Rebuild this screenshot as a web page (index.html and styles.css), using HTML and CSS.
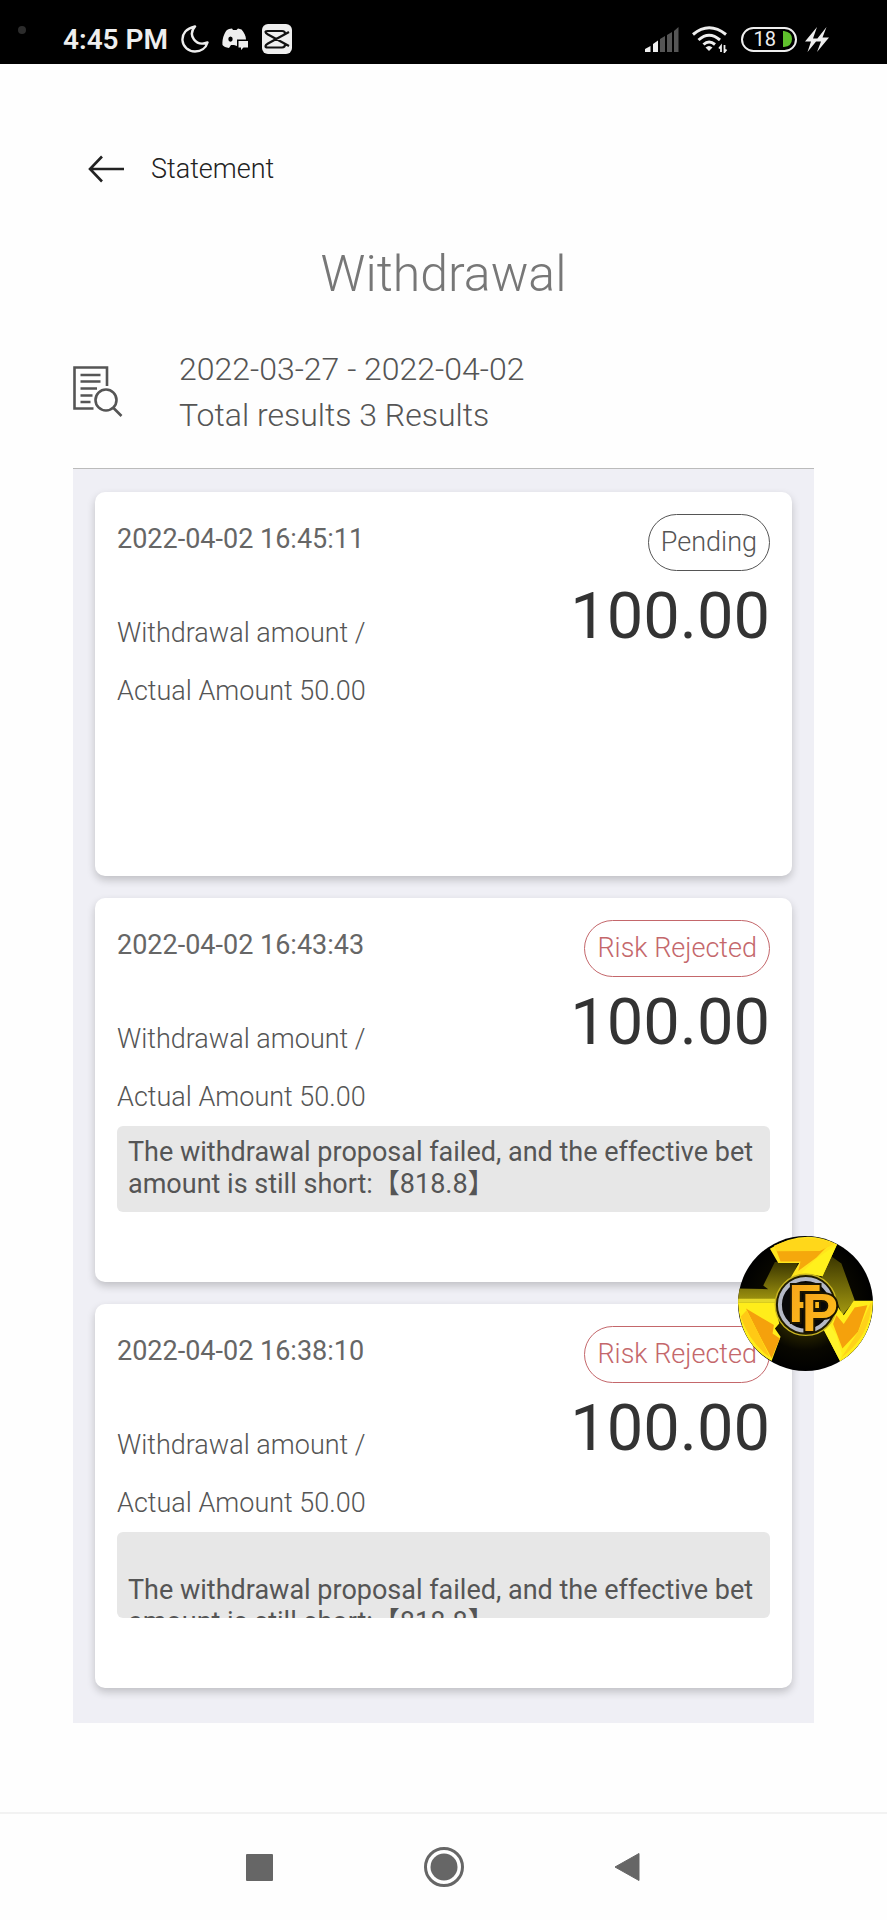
FILE: index.html
```
<!DOCTYPE html>
<html lang="en">
<head>
  <meta charset="UTF-8">
  <meta name="viewport" content="width=device-width, initial-scale=1.0">
  <title>Withdrawal</title>
  <link rel="stylesheet" href="styles.css">
</head>
<body>
  <div class="status-bar">
    <span class="camera"></span>
    <div class="status-left">
      <span class="clock">4:45 PM</span>
      <svg width="28" height="28" viewBox="0 0 28 28" fill="none" stroke="#eee" stroke-width="2.400" stroke-linejoin="round">
        <path d="M14 1.500C5 3.500 1 9 1.500 15.500C2 22 7.500 26.500 14 26.500C20 26.500 25 23 26.500 17.500C21 19.500 16 18.500 13 14.500C10 10.500 10.500 5.500 14 1.500Z"/>
      </svg>
      <svg width="27" height="22" viewBox="0 0 27 22">
        <path fill="#eee" fill-rule="evenodd" d="M7 1L10 0.500L11 2H14.500L16 0.500L19.500 1.500C22 4 24 8 24 11.500H15V18L12 17H9L7 20C4 19.500 1.500 18.500 0.500 17C0 10.500 2.500 4.500 5 2ZM8.500 8.500A2.200 2.600 0 1 0 8.500 13.700A2.200 2.600 0 1 0 8.500 8.500Z"/>
        <path fill="#eee" d="M17 13H26V19.500H21.500L19 22V19.500H16.500V13Z"/>
      </svg>
      <svg width="30" height="30" viewBox="0 0 30 30">
        <rect width="30" height="30" rx="6" fill="#eee"/>
        <path d="M27 8L6 19.500Q3.500 21 3.500 22Q3.500 23.500 5.500 23.500H20Q23 23.500 23 20.500M27 22L6 10.500Q3.500 9 3.500 8Q3.500 7 5.500 7H20Q23 7 23 9.500" fill="none" stroke="#111" stroke-width="2.200"/>
      </svg>
    </div>
    <div class="status-right">
      <svg width="34" height="25" viewBox="0 0 34 25">
        <path fill="#eee" d="M0 25V22L5.500 19V25ZM8 25V17L13 13.500V25Z"/>
        <path fill="#555" d="M15 25V12L20 9V25ZM22 25V8L27 5V25ZM29 25V4L33.500 0V25Z"/>
      </svg>
      <svg width="36" height="27" viewBox="0 0 36 27" fill="none" stroke="#eee" stroke-width="3">
        <path d="M1 8.500Q17 -5 34 8.500M6.500 14Q17 4.500 28 14M11.500 18.500Q17 13.500 23 18.500"/>
        <path d="M17 25L13.500 21.500Q17 18.500 20.500 21.500Z" fill="#eee" stroke="none"/>
        <path d="M29 26V20L27 22.500M32.500 19V26L34.500 23.500" stroke-width="1.800"/>
      </svg>
      <span class="battery">
        <span>18</span>
        <svg width="9" height="16" viewBox="0 0 9 16"><path fill="#5fc02c" d="M0 0H1Q9 1 9 8T1 16H0Z"/></svg>
      </span>
      <svg class="bolt" width="24" height="25" viewBox="0 0 24 25" fill="#eee">
        <path d="M12 0L0 14.500H6L2.500 25L13.500 11.500H8ZM21.500 0L10 14.500H16L12 25L24 10.500H17.500Z"/>
      </svg>
    </div>
  </div>

  <main class="page">
    <a href="#" class="back">
      <svg width="36" height="28" viewBox="0 0 36 28" fill="none" stroke="#222" stroke-width="2.600">
        <path d="M14 1.500L2 14L14 26.500M2 14H36"/>
      </svg>
      Statement
    </a>
    <h1 class="title">Withdrawal</h1>

    <div class="summary">
      <svg width="50" height="52" viewBox="0 0 50 52" fill="none" stroke="#555" stroke-width="2.600">
        <path d="M20.500 42.500H1.500V1.500H34V20M7.500 9H27.500M7.500 15.500H27.500M7.500 22.500H24M7.500 29.500H19.500M7.500 36H17.500M40 41.500L48.500 50"/>
        <circle cx="33" cy="34" r="10.500"/>
      </svg>
      <div class="summary-text">
        2022-03-27 - 2022-04-02<br>
        Total results 3 Results
      </div>
    </div>

    <div class="list">
      <div class="card">
        <div class="card-top">
          <div class="info">
            <div class="date">2022-04-02 16:45:11</div>
            <div class="label">Withdrawal amount /</div>
            <div class="label">Actual Amount 50.00</div>
          </div>
          <div class="result">
            <span class="status">Pending</span>
            <div class="amount">100.00</div>
          </div>
        </div>
      </div>

      <div class="card">
        <div class="card-top">
          <div class="info">
            <div class="date">2022-04-02 16:43:43</div>
            <div class="label">Withdrawal amount /</div>
            <div class="label">Actual Amount 50.00</div>
          </div>
          <div class="result">
            <span class="status rejected">Risk Rejected</span>
            <div class="amount">100.00</div>
          </div>
        </div>
        <div class="note">The withdrawal proposal failed, and the effective bet amount is still short:【818.8】</div>
      </div>

      <div class="card">
        <div class="card-top">
          <div class="info">
            <div class="date">2022-04-02 16:38:10</div>
            <div class="label">Withdrawal amount /</div>
            <div class="label">Actual Amount 50.00</div>
          </div>
          <div class="result">
            <span class="status rejected">Risk Rejected</span>
            <div class="amount">100.00</div>
          </div>
        </div>
        <div class="note"><br>The withdrawal proposal failed, and the effective bet amount is still short:【818.8】</div>
      </div>
    </div>
  </main>

  <button class="bubble" aria-label="FP">
    <svg viewBox="54 47 406 406">
      <defs>
        <clipPath id="round"><circle cx="257" cy="250" r="203"/></clipPath>
        <linearGradient id="olive" x1="0" y1="0" x2="0" y2="1">
          <stop offset="0" stop-color="#3a3500"/>
          <stop offset="1" stop-color="#a59a10"/>
        </linearGradient>
        <linearGradient id="gold" x1="0" y1="0" x2="1" y2="1">
          <stop offset="0" stop-color="#f5a01a"/>
          <stop offset="1" stop-color="#ffc41c"/>
        </linearGradient>
        <radialGradient id="dark" cx="0.5" cy="0.5" r="0.5">
          <stop offset="0.4" stop-color="#2c2800"/>
          <stop offset="0.7" stop-color="#080700"/>
          <stop offset="1" stop-color="#000"/>
        </radialGradient>
      </defs>
      <g clip-path="url(#round)">
        <rect x="54" y="47" width="406" height="406" fill="url(#dark)"/>
        <path fill="url(#olive)" d="M165 125H235L210 190L180 230L165 248H54V205L145 207L130 196Z"/>
        <path fill="#e6d92a" d="M54 236H170V248H54Z"/>
        <path fill="url(#olive)" d="M330 105L365 130L405 240L368 285L345 225L305 170Z"/>
        <path fill="#ffe51c" d="M150 85Q255 20 352 72L308 168Q250 150 205 185L238 128H175Z"/>
        <path fill="#f5a80c" d="M165 78L335 66L290 112L235 152L242 124H182Z"/>
        <path fill="#ffd71a" d="M162 76Q255 35 345 70L300 92L170 93Z"/>
        <path fill="#fff01c" d="M352 72L308 168L245 158L290 115Z"/>
        <path fill="#ffed1a" d="M54 248H166L178 310L165 325L182 350L155 423Q60 370 54 248Z"/>
        <path fill="#f5a10c" d="M78 265L162 315L158 340L180 355L155 415L118 345Z"/>
        <path fill="#ffc915" d="M80 270L118 345L150 412Q90 370 62 290Z"/>
        <path fill="#ffed1a" d="M460 242H402L372 285L350 255L342 290L310 325L362 425Q460 360 460 242Z"/>
        <path fill="#f5a10c" d="M443 255L405 262L372 312L350 285L340 312L368 385L415 335Z"/>
        <path fill="#ffd21a" d="M452 250L415 335L366 412Q450 350 456 248Z"/>
        <path fill="#fff42a" d="M328 312L350 345L366 400L362 425L310 325Z"/>
      </g>
      <circle cx="258" cy="254" r="92" fill="#211d00" stroke="#c9b520" stroke-width="4"/>
      <circle cx="258" cy="254" r="78" fill="#080808" stroke="#b5b9c6" stroke-width="12"/>
      <g class="monogram">
        <text x="205" y="306">F</text>
        <text x="246" y="334">P</text>
      </g>
    </svg>
  </button>

  <nav class="nav-bar">
    <button aria-label="Recent apps">
      <svg width="27" height="27" viewBox="0 0 27 27"><rect width="27" height="27" rx="1" fill="#666"/></svg>
    </button>
    <button aria-label="Home">
      <svg width="40" height="40" viewBox="0 0 40 40"><circle cx="20" cy="20" r="18.500" fill="none" stroke="#666" stroke-width="3"/><circle cx="20" cy="20" r="13.500" fill="#666"/></svg>
    </button>
    <button aria-label="Back">
      <svg width="28" height="30" viewBox="0 0 28 30"><path d="M1 15L25 1.500V28.500Z" fill="#666" stroke="#666" stroke-linejoin="round"/></svg>
    </button>
  </nav>
</body>
</html>
```
FILE: styles.css
```
* {
  box-sizing: border-box;
}
body {
  margin: 0;
  min-height: 100vh;
  display: flex;
  flex-direction: column;
  position: relative;
  background: #fefefe;
  color: #555;
  font-family: Roboto, 'Noto Sans CJK SC', sans-serif;
  font-size: 27px;
}
svg {
  display: block;
  flex-shrink: 0;
}
button {
  border: none;
  padding: 0;
  background: none;
  cursor: pointer;
}
.status-bar {
  display: flex;
  justify-content: space-between;
  height: 64px;
  padding: 14px 58px 0 63px;
  background: #000;
  color: #eee;
}
.status-left, .status-right {
  display: flex;
  align-items: center;
  gap: 13px;
}
.camera {
  position: absolute;
  top: 26px;
  left: 18px;
  width: 8px;
  height: 8px;
  border-radius: 50%;
  background: #2c2c2c;
}
.clock {
  font-size: 28px;
  font-weight: 600;
}
.battery {
  display: flex;
  align-items: center;
  justify-content: flex-end;
  gap: 7px;
  width: 56px;
  height: 25px;
  padding-right: 3px;
  border: 2px solid #eee;
  border-radius: 13px;
  font-size: 20px;
}
.bolt {
  margin-left: -5px;
}
.page {
  padding: 85px 73px 0;
}
.back {
  display: inline-flex;
  align-items: center;
  gap: 27px;
  padding-left: 15px;
  line-height: 40px;
  font-weight: 300;
  color: #222;
  text-decoration: none;
}
.title {
  margin: 54px 0 42px;
  text-align: center;
  font-size: 50px;
  font-weight: 300;
  line-height: 60px;
  color: #777;
}
.summary {
  display: flex;
  align-items: center;
  gap: 56px;
  padding-bottom: 30px;
  border-bottom: 1px solid #bbb;
}
.summary-text {
  font-size: 32px;
  font-weight: 300;
  line-height: 46px;
}
.list {
  display: flex;
  flex-direction: column;
  gap: 22px;
  padding: 23px 22px 35px;
  background: #efeff5;
}
.card {
  min-height: 384px;
  padding: 22px;
  border-radius: 10px;
  background: #fff;
  box-shadow: 0 4px 8px rgba(0, 0, 0, 0.2);
}
.card-top {
  display: flex;
  justify-content: space-between;
}
.date {
  margin-bottom: 40px;
  line-height: 50px;
  color: #666;
}
.label {
  line-height: 58px;
  font-weight: 300;
}
.result {
  display: flex;
  flex-direction: column;
  align-items: flex-end;
}
.status {
  padding: 0 12px;
  border: 1px solid #555;
  border-radius: 29px;
  line-height: 55px;
  font-weight: 300;
}
.status.rejected {
  border-color: #c4676b;
  color: #c4676b;
}
.amount {
  font-size: 65px;
  line-height: 90px;
  color: #333;
}
.note {
  height: 86px;
  padding: 10px 11px;
  overflow: hidden;
  border-radius: 6px;
  background: #e7e7e7;
  line-height: 32px;
}
.bubble {
  position: absolute;
  top: 1236px;
  right: 14px;
  width: 135px;
  height: 135px;
  border-radius: 50%;
}
.monogram {
  font-size: 164px;
  font-weight: 700;
  fill: url(#gold);
  stroke: #1a1400;
  stroke-width: 12px;
  paint-order: stroke;
}
.nav-bar {
  display: flex;
  justify-content: center;
  gap: 24px;
  height: 108px;
  margin-top: auto;
  border-top: 2px solid #f2f2f2;
}
.nav-bar button {
  display: flex;
  align-items: center;
  justify-content: center;
  width: 160px;
}
```
